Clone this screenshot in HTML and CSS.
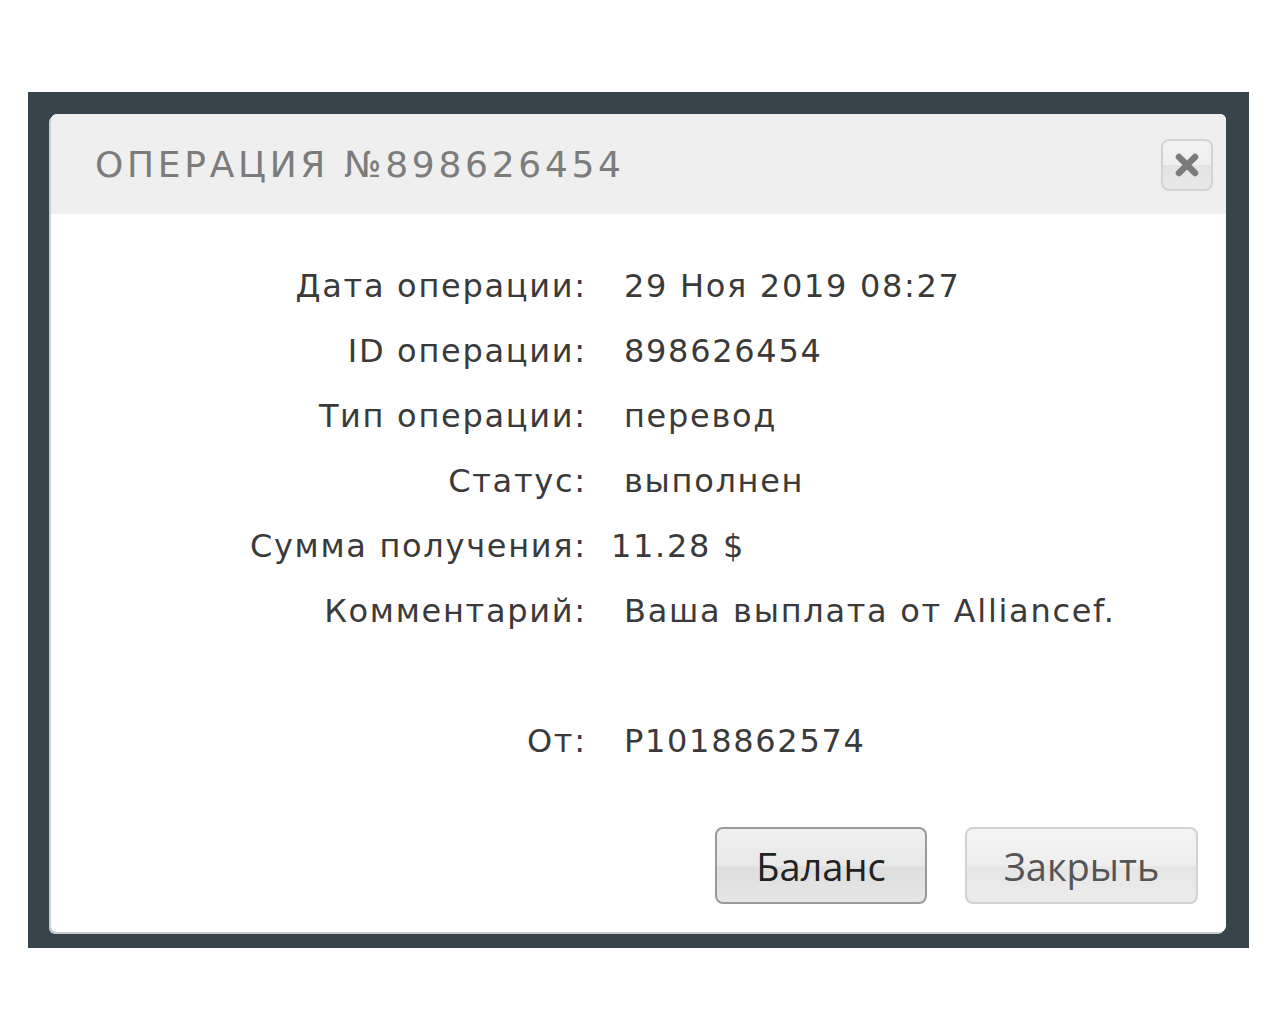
FILE: index.html
```html
<!DOCTYPE html>
<html lang="ru">
<head>
<meta charset="utf-8">
<title>Операция №898626454</title>
<link rel="stylesheet" href="styles.css">
</head>
<body>
<div class="overlay">
  <div class="dialog">
    <div class="dialog-header">
      <h1 class="dialog-title">ОПЕРАЦИЯ №898626454</h1>
      <button class="close-btn" type="button" aria-label="Закрыть">
        <svg width="24" height="24" viewBox="0 0 24 24"><path d="M4 4 L20 20 M20 4 L4 20" stroke="#7b7b7b" stroke-width="6.5" stroke-linecap="round"/></svg>
      </button>
    </div>
    <div class="dialog-body">
      <div class="info">
        <div class="label">Дата операции:</div><div class="value">29 Ноя 2019 08:27</div>
        <div class="label">ID операции:</div><div class="value">898626454</div>
        <div class="label">Тип операции:</div><div class="value">перевод</div>
        <div class="label">Статус:</div><div class="value">выполнен</div>
        <div class="label">Сумма получения:</div><div class="value tight">11.28 $</div>
        <div class="label">Комментарий:</div><div class="value">Ваша выплата от Alliancef.</div>
        <div class="label"></div><div class="value"></div>
        <div class="label">От:</div><div class="value">P1018862574</div>
      </div>
      <div class="actions">
        <button class="btn btn-primary" type="button">Баланс</button>
        <button class="btn btn-secondary" type="button">Закрыть</button>
      </div>
    </div>
  </div>
</div>
</body>
</html>
```

FILE: styles.css
```css
html, body {
  margin: 0;
  padding: 0;
  background: #ffffff;
}
body {
  padding-top: 92px;
  padding-left: 28px;
}
.overlay {
  width: 1221px;
  height: 856px;
  box-sizing: border-box;
  background: #37444c;
  padding: 22px 23px 16px 23px;
}
.dialog {
  width: 1175px;
  height: 818px;
  background: #ffffff;
  border-radius: 6px;
  box-shadow: -2px 2px 0 #c9cdcf;
  display: flex;
  flex-direction: column;
  overflow: hidden;
}
.dialog-header {
  height: 100px;
  flex: none;
  background: #efefef;
  display: flex;
  align-items: center;
  justify-content: space-between;
  padding: 0 13px 0 44px;
}
.dialog-title {
  margin: 0;
  font-family: "DejaVu Sans", sans-serif;
  font-weight: normal;
  font-size: 36px;
  letter-spacing: 3.7px;
  color: #7c7c7c;
}
.close-btn {
  width: 52px;
  height: 52px;
  box-sizing: border-box;
  border: 2px solid #d3d3d3;
  border-radius: 8px;
  background: linear-gradient(#f2f2f2 0%, #efefef 50%, #e3e3e3 51%, #e9e9e9 100%);
  display: flex;
  align-items: center;
  justify-content: center;
  padding: 0;
  margin-top: 2px;
}
.dialog-body {
  flex: 1;
  display: flex;
  flex-direction: column;
  justify-content: space-between;
  padding: 40px 28px 28px 0;
}
.info {
  display: grid;
  grid-template-columns: 534px 1fr;
  column-gap: 26px;
  grid-auto-rows: 65px;
  font-family: "DejaVu Sans", sans-serif;
  font-size: 32px;
  letter-spacing: 1.7px;
  color: #3a3a3a;
  line-height: 65px;
}
.label {
  text-align: right;
  margin-right: -1.7px;
}
.value {
  padding-left: 13px;
}
.value.tight {
  padding-left: 0;
}
.actions {
  display: flex;
  justify-content: flex-end;
  gap: 38px;
}
.btn {
  height: 77px;
  border-radius: 8px;
  font-family: "Open Sans", sans-serif;
  font-size: 38px;
  padding: 0;
  background: linear-gradient(#f0f0f0 0%, #e8e8e8 50%, #dedede 52%, #e6e6e6 100%);
}
.btn-primary {
  width: 212px;
  border: 2px solid #9a9a9a;
  color: #222222;
}
.btn-secondary {
  width: 233px;
  border: 2px solid #d2d2d2;
  color: #555555;
  background: linear-gradient(#f4f4f4 0%, #eeeeee 50%, #e6e6e6 52%, #ececec 100%);
}
```
